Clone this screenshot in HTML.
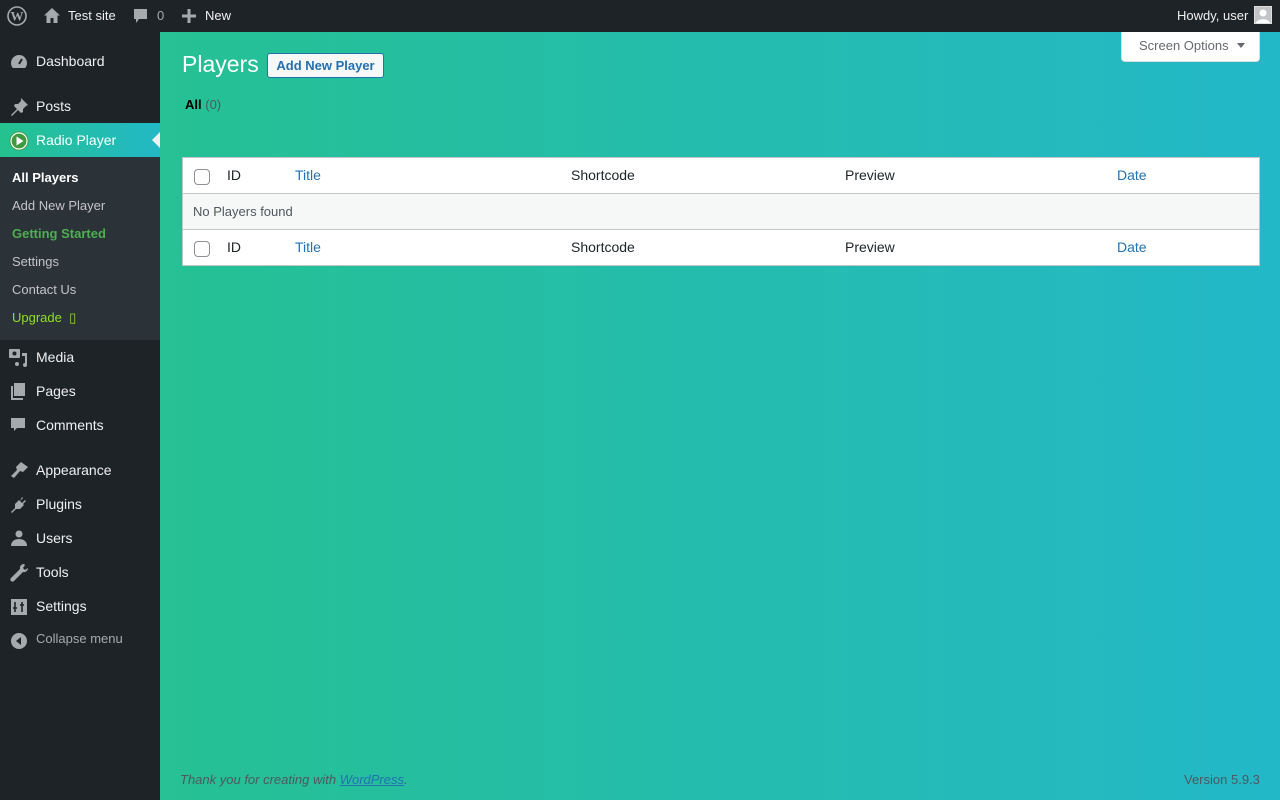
<!DOCTYPE html>
<html><head><meta charset="utf-8"><style>
*{box-sizing:border-box;margin:0;padding:0}
body{width:1280px;height:800px;overflow:hidden;font-family:"Liberation Sans",sans-serif;font-size:13px;position:relative;background:linear-gradient(90deg,#26c28c 0%,#23b8c8 100%)}
.abs{position:absolute}
#bar{left:0;top:0;width:1280px;height:32px;background:#1d2327;color:#f0f0f1;font-size:13px}
#side{left:0;top:32px;width:160px;height:768px;background:#1d2327}
.mi{position:absolute;left:0;width:160px;height:34px;color:#f0f0f1;font-size:14px}
.mi span{position:absolute;left:36px;top:9px}
.mi svg{position:absolute;left:9px;top:8px}
.sub{position:absolute;left:12px;color:#c3c4c7;font-size:13px}
th,td{font-weight:normal}
.blue{color:#2271b1}
</style></head><body>
<div id="bar" class="abs">
 <svg class="abs" style="left:7px;top:6px" width="20" height="20" viewBox="0 0 20 20"><circle cx="10" cy="10" r="9" fill="none" stroke="#a7aaad" stroke-width="1.6"/><text x="10" y="14.5" font-family="Liberation Serif" font-size="13" font-weight="bold" text-anchor="middle" fill="#a7aaad">W</text></svg>
 <svg class="abs" style="left:43px;top:7px" width="18" height="17" viewBox="0 0 18 17"><path d="M9 1L1 8.5h2.5V16h4v-5h3v5h4V8.5H17z" fill="#a7aaad"/></svg>
 <span class="abs" style="left:68px;top:8px">Test site</span>
 <svg class="abs" style="left:133px;top:9px" width="15" height="15" viewBox="0 0 15 15"><path d="M1 0h13v10H6l-3 4v-4H1z" fill="#a7aaad"/></svg>
 <span class="abs" style="left:157px;top:8px;color:#a7aaad">0</span>
 <svg class="abs" style="left:182px;top:9px" width="14" height="14"><path d="M5.5 0h3v5.5H14v3H8.5V14h-3V8.5H0v-3h5.5z" fill="#a7aaad"/></svg>
 <span class="abs" style="left:205px;top:8px">New</span>
 <span class="abs" style="left:1177px;top:8px">Howdy, user</span>
 <div class="abs" style="left:1254px;top:6px;width:18px;height:18px;background:#c3c4c7;border:1px solid #ddd"><svg width="16" height="16"><circle cx="8" cy="6" r="3.5" fill="#fff"/><path d="M1 16c1-5 13-5 14 0z" fill="#fff"/></svg></div>
</div>
<div id="side" class="abs">
 <div class="mi" style="top:12px"><svg width="20" height="20" viewBox="0 0 20 20"><path d="M10 3a8 8 0 0 0-8 8c0 2 .7 3.6 1.8 5h12.4A8 8 0 0 0 10 3z" fill="#a7aaad"/><path d="M10 12l3-5" stroke="#1d2327" stroke-width="2"/></svg><span>Dashboard</span></div>
 <div class="mi" style="top:57px"><svg width="20" height="20" viewBox="0 0 20 20"><path d="M12 1l7 7-2 1-3 3 0 3-2 1-3-3-6 6-1-1 6-6-3-3 1-2 3 0 3-3z" fill="#a7aaad"/></svg><span>Posts</span></div>
 <div class="mi" style="top:91px;background:linear-gradient(90deg,#25c28e,#22b8c6)"><svg width="20" height="20" viewBox="0 0 20 20"><circle cx="10" cy="10" r="9.5" fill="#3e9a3e"/><circle cx="10" cy="10" r="8" fill="none" stroke="#fff" stroke-width="1.2"/><path d="M7.5 5.5v9l7-4.5z" fill="#fff"/></svg><span style="color:#fff">Radio Player</span><div class="abs" style="right:0;top:9px;border:8px solid transparent;border-right-color:#f0f0f1;border-left:0"></div></div>
 <div class="abs" style="left:0;top:125px;width:160px;height:183px;background:#2c3338"></div>
 <div class="sub" style="top:138px;color:#fff;font-weight:bold">All Players</div>
 <div class="sub" style="top:166px">Add New Player</div>
 <div class="sub" style="top:194px;color:#4caf50;font-weight:bold">Getting Started</div>
 <div class="sub" style="top:222px">Settings</div>
 <div class="sub" style="top:250px">Contact Us</div>
 <div class="sub" style="top:278px;color:#8fe01f">Upgrade &nbsp;▯</div>
 <div class="mi" style="top:308px"><svg width="20" height="20" viewBox="0 0 20 20"><rect x="0" y="1" width="11" height="9" rx="1" fill="#a7aaad"/><circle cx="5.5" cy="5.5" r="2" fill="#1d2327"/><path d="M13 5h5v12a2 2 0 1 1-2-2V8h-3z" fill="#a7aaad"/><circle cx="8" cy="16" r="2" fill="#a7aaad"/></svg><span>Media</span></div>
 <div class="mi" style="top:342px"><svg width="20" height="20" viewBox="0 0 20 20"><path d="M5 1h11v13H5z M2 4h2v12h10v2H2z" fill="#a7aaad"/></svg><span>Pages</span></div>
 <div class="mi" style="top:376px"><svg width="20" height="20" viewBox="0 0 20 20"><path d="M2 2h14v10H8l-3 3v-3H2z" fill="#a7aaad"/></svg><span>Comments</span></div>
 <div class="mi" style="top:421px"><svg width="20" height="20" viewBox="0 0 20 20"><path d="M12 1l7 5-5 5-3-1-6 7-3-2 6-6-1-3z" fill="#a7aaad"/></svg><span>Appearance</span></div>
 <div class="mi" style="top:455px"><svg width="20" height="20" viewBox="0 0 20 20"><path d="M13 2l1 1-3 3 2 2 3-3 1 1-3 3 1 1-4 4-4 0-4 4-1-1 4-4 0-4 4-4 1 1z" fill="#a7aaad"/></svg><span>Plugins</span></div>
 <div class="mi" style="top:489px"><svg width="20" height="20" viewBox="0 0 20 20"><circle cx="10" cy="5" r="3.5" fill="#a7aaad"/><path d="M2 17c0-5 4-7 8-7s8 2 8 7z" fill="#a7aaad"/></svg><span>Users</span></div>
 <div class="mi" style="top:523px"><svg width="20" height="20" viewBox="0 0 20 20"><path d="M15 1a4 4 0 0 0-4 5L2 15a2 2 0 0 0 3 3l9-9a4 4 0 0 0 5-4l-3 2-2-2 2-3z" fill="#a7aaad"/></svg><span>Tools</span></div>
 <div class="mi" style="top:557px"><svg width="20" height="20" viewBox="0 0 20 20"><rect x="2" y="2" width="16" height="16" fill="#a7aaad"/><path d="M6 5v10M4 11h4M13 5v10M11 8h4" stroke="#1d2327" stroke-width="1.6"/></svg><span>Settings</span></div>
 <div class="mi" style="top:591px"><svg width="20" height="20" viewBox="0 0 20 20"><circle cx="10" cy="10" r="8" fill="#a7aaad"/><path d="M12 6v8l-5-4z" fill="#1d2327"/></svg><span style="color:#a7aaad;font-size:13px;top:8px">Collapse menu</span></div>
</div>
<div class="abs" style="left:1121px;top:32px;width:139px;height:30px;background:#fff;border:1px solid #dcdcde;border-top:0;border-radius:0 0 4px 4px;color:#646970;font-size:13px;padding:6px 0 0 17px">Screen Options <span style="display:inline-block;margin-left:5px;border:4px solid transparent;border-top:5px solid #646970;vertical-align:-2px"></span></div>
<div class="abs" style="left:182px;top:51px;font-size:23px;color:#fff">Players</div>
<div class="abs" style="left:267px;top:53px;width:117px;height:25px;border:1px solid #2271b1;border-radius:3px;background:#f6f7f7;color:#2271b1;font-weight:bold;font-size:13px;text-align:center;line-height:23px">Add New Player</div>
<div class="abs" style="left:185px;top:97px;color:#000"><b>All</b> <span style="color:#50575e">(0)</span></div>
<div class="abs" style="left:182px;top:157px;width:1078px;height:109px;background:#fff;border:1px solid #c3c4c7"></div>
<div class="abs" style="left:183px;top:193px;width:1076px;height:37px;background:#f6f7f7;border-top:1px solid #c3c4c7;border-bottom:1px solid #c3c4c7"></div>
<div class="abs" style="left:193px;top:204px;color:#50575e">No Players found</div>
<div class="abs" style="left:194px;top:169px;width:16px;height:16px;border:1px solid #8c8f94;border-radius:4px;background:#fff"></div>
<div class="abs" style="left:194px;top:241px;width:16px;height:16px;border:1px solid #8c8f94;border-radius:4px;background:#fff"></div>
<div class="abs" style="left:227px;top:167px;font-size:14px;color:#1d2327">ID</div>
<div class="abs blue" style="left:295px;top:167px;font-size:14px">Title</div>
<div class="abs" style="left:571px;top:167px;font-size:14px;color:#1d2327">Shortcode</div>
<div class="abs" style="left:845px;top:167px;font-size:14px;color:#1d2327">Preview</div>
<div class="abs blue" style="left:1117px;top:167px;font-size:14px">Date</div>
<div class="abs" style="left:227px;top:239px;font-size:14px;color:#1d2327">ID</div>
<div class="abs blue" style="left:295px;top:239px;font-size:14px">Title</div>
<div class="abs" style="left:571px;top:239px;font-size:14px;color:#1d2327">Shortcode</div>
<div class="abs" style="left:845px;top:239px;font-size:14px;color:#1d2327">Preview</div>
<div class="abs blue" style="left:1117px;top:239px;font-size:14px">Date</div>
<div class="abs" style="left:180px;top:772px;color:#50575e;font-style:italic">Thank you for creating with <span style="color:#2271b1;text-decoration:underline">WordPress</span>.</div>
<div class="abs" style="left:1184px;top:772px;color:#50575e">Version 5.9.3</div>
</body></html>
